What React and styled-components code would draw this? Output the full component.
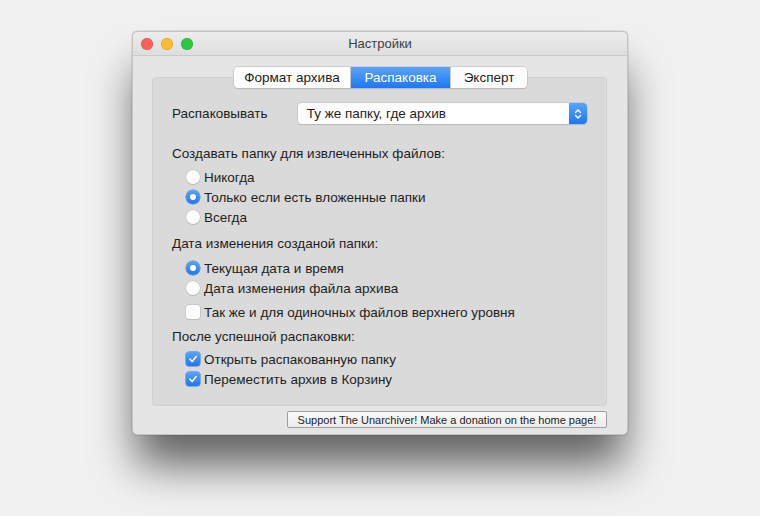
import React from 'react';
import styled, { createGlobalStyle } from 'styled-components';

const GlobalStyle = createGlobalStyle`
  html, body {
    margin: 0;
    padding: 0;
    background: #f1f1f1;
  }
  body {
    font-family: "Liberation Sans", Arial, sans-serif;
    font-size: 13.5px;
    color: #1e1e1e;
  }
`;

const Page = styled.div`
  width: 760px;
  height: 516px;
  padding-top: 31px;
  box-sizing: border-box;
  display: flex;
  justify-content: center;
  overflow: hidden;
`;

const Window = styled.div`
  width: 496px;
  height: 404px;
  background: #e5e5e5;
  border-radius: 5px;
  border: 1px solid #c4c4c4;
  box-sizing: border-box;
  box-shadow: 0 34px 44px -4px rgba(0, 0, 0, 0.6), 0 0 0 0.5px rgba(0, 0, 0, 0.15);
  display: flex;
  flex-direction: column;
`;

const TitleBar = styled.div`
  height: 23px;
  display: flex;
  align-items: center;
  position: relative;
  background: linear-gradient(#ececec, #dedede);
  border-bottom: 1px solid #c9c9c9;
  border-radius: 5px 5px 0 0;
  padding-left: 8px;
`;

const Lights = styled.div`
  display: flex;
  gap: 8px;
`;

const Light = styled.span`
  width: 12px;
  height: 12px;
  border-radius: 50%;
  background: ${p => p.color};
  box-shadow: inset 0 0 0 0.5px rgba(0, 0, 0, 0.18);
`;

const Title = styled.div`
  position: absolute;
  left: 0;
  right: 0;
  text-align: center;
  color: #3e3e3e;
  font-size: 13px;
  pointer-events: none;
`;

const Body = styled.div`
  flex: 1;
  display: flex;
  flex-direction: column;
  padding: 11px 20px 0 19px;
`;

const TabBox = styled.div`
  position: relative;
  height: 329px;
  margin-top: 10px;
  background: #dadada;
  border: 1px solid #d0d0d0;
  border-radius: 4px;
  box-sizing: border-box;
  padding: 25px 19px 0 19px;
`;

const Tabs = styled.div`
  position: absolute;
  top: -11px;
  left: 81px;
  display: flex;
  height: 21px;
  border-radius: 4px;
  background: #fdfdfd;
  box-shadow: 0 0 0 0.5px #b8b8b8, 0 1px 1px rgba(0, 0, 0, 0.15);
  overflow: hidden;
`;

const Tab = styled.div`
  display: flex;
  align-items: center;
  justify-content: center;
  width: ${p => p.w}px;
  font-size: 13.5px;
  color: ${p => (p.active ? '#ffffff' : '#1e1e1e')};
  background: ${p => (p.active ? 'linear-gradient(#5aa3f9, #1f78f0)' : 'transparent')};
  border-left: ${p => (p.first ? 'none' : '1px solid #c6c6c6')};
`;

const PopupRow = styled.div`
  display: flex;
  align-items: center;
  height: 21px;
`;

const PopupLabel = styled.div`
  width: 126px;
`;

const Popup = styled.div`
  width: 290px;
  height: 21px;
  display: flex;
  align-items: center;
  background: #fefefe;
  border-radius: 4px;
  box-shadow: 0 0 0 0.5px #b9b9b9, 0 1px 1px rgba(0, 0, 0, 0.15);
  overflow: hidden;
`;

const PopupText = styled.div`
  flex: 1;
  padding-left: 9px;
`;

const PopupArrows = styled.div`
  width: 18px;
  height: 100%;
  display: flex;
  align-items: center;
  justify-content: center;
  background: linear-gradient(#5aa3f9, #1f78f0);
`;

const SectionTitle = styled.div`
  margin-top: ${p => p.mt}px;
  height: 18px;
  line-height: 18px;
`;

const Options = styled.div`
  display: flex;
  flex-direction: column;
  padding-left: 14px;
  margin-top: ${p => p.mt}px;
`;

const Option = styled.div`
  display: flex;
  align-items: center;
  height: 20px;
  gap: 4px;
  margin-top: ${p => p.mt || 0}px;
`;

const Radio = styled.span`
  width: 14px;
  height: 14px;
  border-radius: 50%;
  box-sizing: border-box;
  display: flex;
  align-items: center;
  justify-content: center;
  background: ${p => (p.checked ? 'linear-gradient(#5aa3f9, #1f78f0)' : '#fdfdfd')};
  box-shadow: ${p => (p.checked ? '0 0 0 0.5px #2a76dc' : '0 0 0 0.5px #b5b5b5, 0 1px 1px rgba(0,0,0,0.12)')};
  &::after {
    content: '';
    display: ${p => (p.checked ? 'block' : 'none')};
    width: 6px;
    height: 6px;
    border-radius: 50%;
    background: #fff;
  }
`;

const Check = styled.span`
  width: 14px;
  height: 14px;
  border-radius: 3px;
  box-sizing: border-box;
  display: flex;
  align-items: center;
  justify-content: center;
  background: ${p => (p.checked ? 'linear-gradient(#5aa3f9, #1f78f0)' : '#fdfdfd')};
  box-shadow: ${p => (p.checked ? '0 0 0 0.5px #2a76dc' : '0 0 0 0.5px #b5b5b5, 0 1px 1px rgba(0,0,0,0.12)')};
`;

const Footer = styled.div`
  display: flex;
  justify-content: flex-end;
  margin-top: 5px;
`;

const SupportButton = styled.div`
  width: 320px;
  height: 17px;
  box-sizing: border-box;
  display: flex;
  align-items: center;
  justify-content: center;
  font-size: 11px;
  color: #222;
  background: linear-gradient(#fafafa, #ececec);
  border: 1px solid #9e9e9e;
  border-radius: 2px;
`;

const CheckMark = () => (
  <svg width="10" height="10" viewBox="0 0 10 10">
    <path d="M2 5.2 L4.2 7.5 L8.2 2.5" fill="none" stroke="#fff" strokeWidth="1.6" strokeLinecap="round" strokeLinejoin="round" />
  </svg>
);

const Arrows = () => (
  <svg width="8" height="12" viewBox="0 0 8 12">
    <path d="M1.5 4.5 L4 2 L6.5 4.5 M1.5 7.5 L4 10 L6.5 7.5" fill="none" stroke="#fff" strokeWidth="1.4" strokeLinecap="round" strokeLinejoin="round" />
  </svg>
);

const RadioOption = ({ checked, children, mt }) => (
  <Option mt={mt}>
    <Radio checked={checked} />
    {children}
  </Option>
);

const CheckOption = ({ checked, children, mt }) => (
  <Option mt={mt}>
    <Check checked={checked}>{checked && <CheckMark />}</Check>
    {children}
  </Option>
);

export default function App() {
  return (
    <>
      <GlobalStyle />
      <Page>
        <Window>
          <TitleBar>
            <Lights>
              <Light color="#fc5f57" />
              <Light color="#fdbc2e" />
              <Light color="#28c840" />
            </Lights>
            <Title>Настройки</Title>
          </TitleBar>
          <Body>
            <TabBox>
              <Tabs>
                <Tab first w={116}>Формат архива</Tab>
                <Tab active w={99}>Распаковка</Tab>
                <Tab w={76}>Эксперт</Tab>
              </Tabs>
              <PopupRow>
                <PopupLabel>Распаковывать</PopupLabel>
                <Popup>
                  <PopupText>Ту же папку, где архив</PopupText>
                  <PopupArrows>
                    <Arrows />
                  </PopupArrows>
                </Popup>
              </PopupRow>
              <SectionTitle mt={21}>Создавать папку для извлеченных файлов:</SectionTitle>
              <Options mt={4}>
                <RadioOption>Никогда</RadioOption>
                <RadioOption checked>Только если есть вложенные папки</RadioOption>
                <RadioOption>Всегда</RadioOption>
              </Options>
              <SectionTitle mt={8}>Дата изменения созданой папки:</SectionTitle>
              <Options mt={5}>
                <RadioOption checked>Текущая дата и время</RadioOption>
                <RadioOption>Дата изменения файла архива</RadioOption>
                <CheckOption mt={4}>Так же и для одиночных файлов верхнего уровня</CheckOption>
              </Options>
              <SectionTitle mt={6}>После успешной распаковки:</SectionTitle>
              <Options mt={3}>
                <CheckOption checked>Открыть распакованную папку</CheckOption>
                <CheckOption checked>Переместить архив в Корзину</CheckOption>
              </Options>
            </TabBox>
            <Footer>
              <SupportButton>Support The Unarchiver! Make a donation on the home page!</SupportButton>
            </Footer>
          </Body>
        </Window>
      </Page>
    </>
  );
}
